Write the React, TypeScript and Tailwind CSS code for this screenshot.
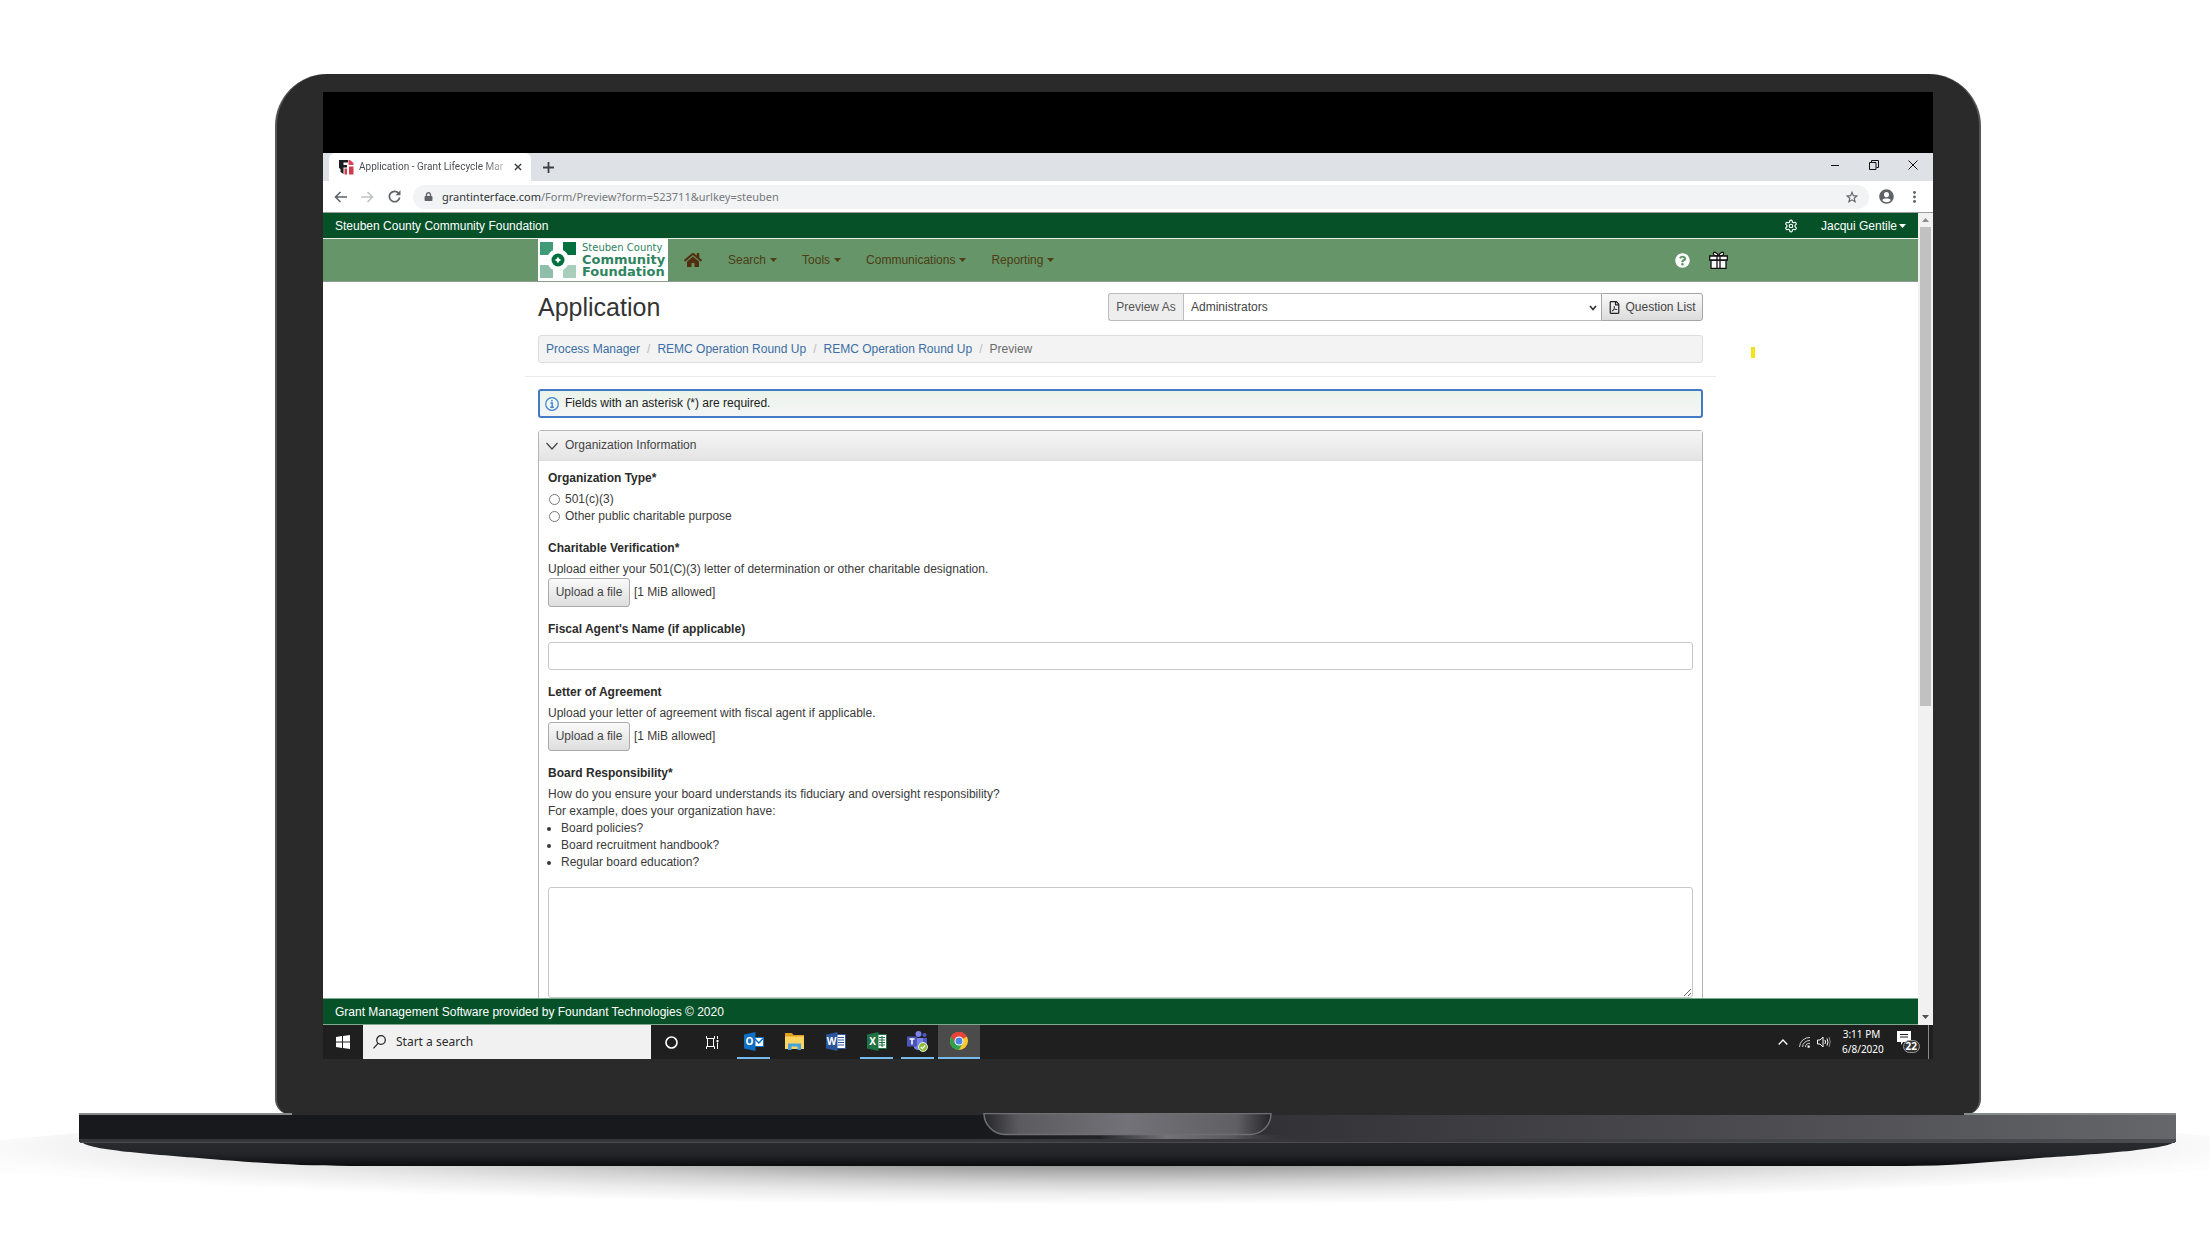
import type { ReactNode } from "react";
import { FaHome, FaQuestionCircle, FaLock, FaUserCircle, FaRegFilePdf } from "react-icons/fa";
import { LuSettings } from "react-icons/lu";

const NAV_ITEMS = ["Search", "Tools", "Communications", "Reporting"];

const CRUMBS = ["Process Manager", "REMC Operation Round Up", "REMC Operation Round Up"];

function Caret({ className = "" }: { className?: string }) {
  return (
    <svg className={className} width="7" height="4" viewBox="0 0 7 4" fill="currentColor">
      <path d="M0 0h7L3.500 4z" />
    </svg>
  );
}

/* ---------- browser chrome ---------- */

function Favicon() {
  return (
    <svg width="15" height="15" viewBox="0 0 15 15">
      <path d="M0 0h9v2.500H4.500V5H8v2.500H4.500V14L1.500 12V9L0 8z" fill="#1d1d20" />
      <path d="M9.500 0h1.500l3.500 3v2H9.500z" fill="#d84455" />
      <path d="M5.500 8.500h2.500v6H5.500zM10 6.500h4.500v8H10z" fill="#cf3b4c" />
    </svg>
  );
}

function TabStrip() {
  return (
    <div className="flex h-7 items-end bg-[#dee1e6] pl-[6px]">
      <div className="flex h-7 w-[202px] items-center rounded-t-md bg-white pl-[10px] pr-[9px]">
        <Favicon />
        <span className="ml-[5px] whitespace-nowrap bg-gradient-to-r from-[#45494d] from-85% to-[#b5b7b9] bg-clip-text font-[Roboto] text-[10px] leading-4 text-transparent">
          Application - Grant Lifecycle Mar
        </span>
        <button aria-label="Close tab" className="ml-auto">
          <svg width="8" height="8" viewBox="0 0 9 9" stroke="#3c4043" strokeWidth="1.600">
            <path d="M1 1l7 7M8 1L1 8" />
          </svg>
        </button>
      </div>
      <button aria-label="New tab" className="ml-3 flex h-7 items-center">
        <svg width="11" height="11" viewBox="0 0 11 11" stroke="#3c4043" strokeWidth="1.800">
          <path d="M5.500 0v11M0 5.500h11" />
        </svg>
      </button>
      <div className="ml-auto mr-[15px] flex h-7 items-center gap-[29px] pb-1">
        <button aria-label="Minimize">
          <svg width="10" height="10" viewBox="0 0 10 10" stroke="#111">
            <path d="M1 5.500h8" />
          </svg>
        </button>
        <button aria-label="Restore">
          <svg width="10" height="10" viewBox="0 0 10 10" fill="none" stroke="#111">
            <path d="M.5 2.500h6.500v7H.5zM2.500 2.500v-2h7v7h-2" />
          </svg>
        </button>
        <button aria-label="Close window">
          <svg width="10" height="10" viewBox="0 0 10 10" stroke="#111">
            <path d="M.5.5l9 9M9.500.5l-9 9" />
          </svg>
        </button>
      </div>
    </div>
  );
}

function Toolbar() {
  return (
    <div className="flex h-8 items-center border-b border-[#9c9c9c] bg-white pl-[11px] pr-[17px]">
      <button aria-label="Back">
        <svg width="13" height="12" viewBox="0 0 13 12" fill="none" stroke="#5f6368" strokeWidth="1.600">
          <path d="M13 6H1.500M6.500 1l-5 5 5 5" />
        </svg>
      </button>
      <button aria-label="Forward" className="ml-[14px]">
        <svg width="13" height="12" viewBox="0 0 13 12" fill="none" stroke="#bfc1c4" strokeWidth="1.600">
          <path d="M0 6h11.500M6.500 1l5 5-5 5" />
        </svg>
      </button>
      <button aria-label="Reload" className="ml-[14px]">
        <svg width="13" height="13" viewBox="0 0 13 13" fill="none" stroke="#5f6368" strokeWidth="1.700">
          <path d="M10.900 3.600A5.200 5.200 0 1 0 11.700 7.500" />
          <path d="M12.500.3v5H7.500z" fill="#5f6368" stroke="none" />
        </svg>
      </button>
      <div className="ml-[12px] flex h-6 flex-1 items-center rounded-full bg-[#f1f3f4] px-[11px]">
        <FaLock size={9} color="#5f6368" />
        <span className="ml-[9px] flex-1 text-[11px] leading-5 text-[#77797c]">
          <span className="text-[#303235]">grantinterface.com</span>/Form/Preview?form=523711&urlkey=steuben
        </span>
        <svg width="12" height="12" viewBox="0 0 24 24" fill="none" stroke="#5f6368" strokeWidth="2.200">
          <path d="M12 2.500l2.700 6.800 7.300.5-5.600 4.700 1.800 7.100L12 17.700l-6.200 3.900 1.800-7.100L2 9.800l7.300-.5z" />
        </svg>
      </div>
      <FaUserCircle size={15} color="#5f6368" className="ml-[10px]" />
      <svg className="ml-[19px]" width="3" height="12" viewBox="0 0 3 12" fill="#5f6368">
        <circle cx="1.500" cy="1.500" r="1.400" />
        <circle cx="1.500" cy="6" r="1.400" />
        <circle cx="1.500" cy="10.500" r="1.400" />
      </svg>
    </div>
  );
}

/* ---------- grant site ---------- */

function LogoMark() {
  return (
    <svg width="36" height="36" viewBox="0 0 36 36">
      <rect width="13" height="13" fill="#3f9a76" />
      <rect x="23" width="13" height="13" fill="#04703f" />
      <rect y="23" width="13" height="13" fill="#8fbfa8" />
      <rect x="23" y="23" width="13" height="13" fill="#a9cfbc" />
      <circle cx="18" cy="18" r="11" fill="#fff" />
      <circle cx="18" cy="18" r="6.500" fill="#04703f" />
      <path d="M18 15.500l.9 1.600 1.600.9-1.600.9-.9 1.600-.9-1.600-1.600-.9 1.600-.9z" fill="#fff" stroke="#fff" />
    </svg>
  );
}

function GiftIcon() {
  return (
    <svg width="19" height="18" viewBox="0 0 19 18" fill="#fff" stroke="#111" strokeWidth="1.300">
      <path d="M9.500 5C8 1 4 0 4.500 3c.2 1.500 2.500 2 5 2zM9.500 5c1.500-4 5.500-5 5-2-.2 1.500-2.500 2-5 2z" />
      <path d="M2 9h15v8.300H2z" />
      <path d="M.7 5h17.600v4H.7z" />
      <path d="M8 5v12M11 5v12" />
    </svg>
  );
}

function SiteHeader() {
  return (
    <header>
      <div className="flex h-[26px] items-center border-b border-[#e6efe8] bg-[#065128] pl-[12px] pr-[12px] text-[12px] text-white">
        <span>Steuben County Community Foundation</span>
        <button aria-label="Settings" className="ml-auto">
          <LuSettings size={14} />
        </button>
        <button className="ml-[23px] flex items-center gap-[2px]">
          Jacqui Gentile
          <Caret />
        </button>
      </div>
      <nav className="h-[43px] border-b border-[#8f9a90] bg-[#659569]">
        <div className="mx-auto flex h-[42px] max-w-[1215px] items-center pl-[25px]">
          <a href="#home" className="flex h-[42px] w-[130px] items-center gap-[6px] bg-white pl-[2px] font-['DejaVu_Sans']">
            <LogoMark />
            <span className="flex flex-col text-[13px] font-bold leading-3 text-[#2f8460]">
              <span className="text-[10px] font-normal">Steuben County</span>
              <span>Community</span>
              <span>Foundation</span>
            </span>
          </a>
          <a href="#home" aria-label="Home" className="ml-[16px] text-[#532e0e]">
            <FaHome size={18} />
          </a>
          <div className="ml-[26px] flex gap-[25px]">
            {NAV_ITEMS.map((item) => (
              <button key={item} className="flex items-center gap-[4px] text-[12px] text-[#4d3c14]">
                {item}
                <Caret />
              </button>
            ))}
          </div>
          <button aria-label="Help" className="ml-auto text-white">
            <FaQuestionCircle size={15} />
          </button>
          <button aria-label="Gifts" className="ml-[19px]">
            <GiftIcon />
          </button>
        </div>
      </nav>
    </header>
  );
}

function Field({ label, htmlFor, children }: { label: string; htmlFor: string; children: ReactNode }) {
  return (
    <div className="mb-[14px]">
      <label htmlFor={htmlFor} className="mb-1 block font-bold text-[#2b2b2b]">
        {label}
      </label>
      {children}
    </div>
  );
}

function UploadRow({ id }: { id: string }) {
  return (
    <div className="flex items-center gap-[4px]">
      <button
        id={id}
        className="h-[29px] w-[82px] rounded-[3px] border border-[#aaa] bg-gradient-to-b from-[#fafafa] to-[#dedede] text-[#444]"
      >
        Upload a file
      </button>
      <span>[1 MiB allowed]</span>
    </div>
  );
}

function Radio({ label }: { label: string }) {
  return (
    <label className="flex items-center gap-[5px]">
      <input
        type="radio"
        name="org-type"
        className="ml-px size-[11px] appearance-none rounded-full border border-[#767676] bg-white checked:border-4"
      />
      {label}
    </label>
  );
}

function ApplicationForm() {
  return (
    <main className="relative min-h-0 flex-1 overflow-hidden bg-white text-[12px] leading-[17px] text-[#3a3a3a]">
      <div className="mx-auto max-w-[1165px] pt-[11px]">
        <div className="flex h-7 items-center">
          <h1 className="text-[25px] leading-7 text-[#333]">Application</h1>
          <div className="ml-auto flex h-7 w-[595px]">
            <label
              htmlFor="preview-as"
              className="flex w-[75px] items-center justify-center rounded-l-[3px] border border-r-0 border-[#bbb] bg-[#eee] text-[#555]"
            >
              Preview As
            </label>
            <div className="relative flex-1">
              <select
                id="preview-as"
                className="h-7 w-full appearance-none border border-r-0 border-[#bbb] bg-white px-[7px] text-[#444]"
              >
                <option>Administrators</option>
              </select>
              <svg
                className="pointer-events-none absolute right-[4px] top-[12px]"
                width="8"
                height="6"
                viewBox="0 0 8 6"
                fill="none"
                stroke="#333"
                strokeWidth="1.600"
              >
                <path d="M1 1l3 3.500L7 1" />
              </svg>
            </div>
            <button className="flex w-[102px] items-center justify-center gap-[4px] rounded-r-[3px] border border-[#a5a5a5] bg-gradient-to-b from-[#fafafa] to-[#dcdcdc] text-[#444]">
              <FaRegFilePdf size={13} color="#222" />
              Question List
            </button>
          </div>
        </div>
        <ol className="mt-[14px] flex h-7 items-center rounded-[3px] border border-[#ddd] bg-[#f3f3f3] pl-[7px]">
          {CRUMBS.map((crumb, i) => (
            <li key={i} className="flex items-center text-[#bbb]">
              <a href="#crumb" className="text-[#3b6fa5]">
                {crumb}
              </a>
              <span className="mx-[7px]">/</span>
            </li>
          ))}
          <li className="text-[#6b6b6b]">Preview</li>
        </ol>
      </div>
      <hr className="mx-auto mt-[13px] max-w-[1191px] border-[#eaeaea]" />
      <div className="mx-auto mt-[12px] max-w-[1165px]">
        <div className="flex h-[29px] items-center rounded-[3px] border-2 border-[#4479c4] bg-gradient-to-b from-[#eaf4ea] to-[#f4f5f6] pl-[5px] text-[#222]">
          <svg width="14" height="14" viewBox="0 0 14 14" fill="none" stroke="#3c82cf">
            <circle cx="7" cy="7" r="6.300" strokeWidth="1.200" />
            <path d="M5.500 6h1.700v4M5.300 10.300h3.500M6.900 3v1.500" strokeWidth="1.400" />
          </svg>
          <span className="ml-[6px]">Fields with an asterisk (*) are required.</span>
        </div>
        <section className="mt-[12px] rounded-t-[3px] border border-[#b5b5b5]">
          <h2 className="flex h-[30px] items-center border-b border-[#ddd] bg-gradient-to-b from-[#f6f6f6] to-[#e4e4e4] pl-[7px] text-[#444]">
            <svg width="12" height="8" viewBox="0 0 12 8" fill="none" stroke="#444" strokeWidth="1.200">
              <path d="M.5 1L6 7l5.500-6" />
            </svg>
            <span className="ml-[7px]">Organization Information</span>
          </h2>
          <form className="px-[9px] pb-8 pt-[9px]">
            <fieldset className="mb-[15px]">
              <legend className="mb-1 font-bold text-[#2b2b2b]">Organization Type*</legend>
              <Radio label="501(c)(3)" />
              <Radio label="Other public charitable purpose" />
            </fieldset>
            <Field label="Charitable Verification*" htmlFor="verification">
              <p>Upload either your 501(C)(3) letter of determination or other charitable designation.</p>
              <UploadRow id="verification" />
            </Field>
            <Field label="Fiscal Agent's Name (if applicable)" htmlFor="fiscal-agent">
              <input
                id="fiscal-agent"
                type="text"
                className="block h-7 w-full rounded-[3px] border border-[#c8c8c8] bg-white px-2"
              />
            </Field>
            <Field label="Letter of Agreement" htmlFor="agreement">
              <p>Upload your letter of agreement with fiscal agent if applicable.</p>
              <UploadRow id="agreement" />
            </Field>
            <Field label="Board Responsibility*" htmlFor="board">
              <p>How do you ensure your board understands its fiduciary and oversight responsibility?</p>
              <p>For example, does your organization have:</p>
              <ul className="list-disc pl-[13px]">
                <li>Board policies?</li>
                <li>Board recruitment handbook?</li>
                <li>Regular board education?</li>
              </ul>
              <textarea
                id="board"
                className="mt-4 block h-[111px] w-full rounded-[3px] border border-[#c8c8c8] bg-white px-2"
              />
            </Field>
          </form>
        </section>
      </div>
      <div className="absolute right-[163px] top-[65px] h-[11px] w-[4px] bg-[#f7e01c]" />
    </main>
  );
}

function Scrollbar() {
  return (
    <div className="flex w-[15px] flex-col items-center bg-[#f1f1f1]">
      <svg className="my-[5px]" width="7" height="4" viewBox="0 0 7 4" fill="#8c8c8c">
        <path d="M0 4h7L3.500 0z" />
      </svg>
      <div className="h-[479px] w-[11px] bg-[#c1c1c1]" />
      <svg className="mb-[6px] mt-auto" width="7" height="4" viewBox="0 0 7 4" fill="#505050">
        <path d="M0 0h7L3.500 4z" />
      </svg>
    </div>
  );
}

/* ---------- taskbar ---------- */

function OfficeIcon({ letter, color, children }: { letter: string; color: string; children: ReactNode }) {
  return (
    <svg width="20" height="19" viewBox="0 0 20 19">
      {children}
      <path d="M0 2.500L11.500 0v19L0 16.500z" fill={color} />
      <text x="5.500" y="13" textAnchor="middle" fontSize="10" fontWeight="700" fill="#fff">
        {letter}
      </text>
    </svg>
  );
}

function OutlookIcon() {
  return (
    <OfficeIcon letter="O" color="#0f6fc5">
      <path d="M9 5.500h10.500v9H9z" fill="#fff" stroke="#0f6fc5" />
      <path d="M11 7l3.800 4L19 6.500" fill="none" stroke="#0f6fc5" strokeWidth="1.500" />
    </OfficeIcon>
  );
}

function ExplorerIcon() {
  return (
    <svg width="19" height="17" viewBox="0 0 19 17">
      <path d="M0 0h7l1.500 2H19v4H0z" fill="#e0a023" />
      <path d="M0 3.500h19V16H0z" fill="#fbd462" />
      <path d="M3 10.500h13V17h-3.500v-3.500h-6V17H3z" fill="#48a2d8" />
    </svg>
  );
}

function WordIcon() {
  return (
    <OfficeIcon letter="W" color="#2a5699">
      <path d="M9 2.500h10.500v14H9z" fill="#fff" stroke="#2a5699" />
      <path d="M12 5.500h6M12 8h6M12 10.500h6M12 13h6" stroke="#2a5699" strokeWidth="1.200" />
    </OfficeIcon>
  );
}

function ExcelIcon() {
  return (
    <OfficeIcon letter="X" color="#1f7244">
      <path d="M9 2.500h10.500v14H9z" fill="#fff" stroke="#1f7244" />
      <path d="M12 5.500h6M12 8h6M12 10.500h6M12 13h6M15 4v11" stroke="#1f7244" strokeWidth="1.100" />
    </OfficeIcon>
  );
}

function TeamsIcon() {
  return (
    <svg width="21" height="21" viewBox="0 0 21 21">
      <circle cx="11.500" cy="3" r="3" fill="#7b83eb" />
      <circle cx="17.500" cy="4" r="2" fill="#5059c9" />
      <path d="M14 7h6v6a3.500 3.500 0 0 1-6 2z" fill="#5059c9" />
      <path d="M7 7h9v7a5 5 0 0 1-9 3z" fill="#7b83eb" />
      <path d="M0 5.500h10v10H0z" fill="#4b53bc" />
      <path d="M2.500 8h5M5 8v5.500" stroke="#fff" strokeWidth="1.500" />
      <circle cx="16" cy="16" r="4.500" fill="#8cbd3b" stroke="#fff" strokeWidth=".8" />
      <path d="M13.800 16l1.600 1.700 2.800-3.200" fill="none" stroke="#fff" strokeWidth="1.200" />
    </svg>
  );
}

function ChromeIcon() {
  return (
    <svg width="18" height="18" viewBox="0 0 18 18">
      <circle cx="9" cy="9" r="9" fill="#fbc92f" />
      <path d="M9 9L1.200 4.500A9 9 0 0 1 16.800 4.500z" fill="#e5443a" />
      <path d="M1.200 4.500A9 9 0 0 0 8.800 18l4-6.800L9 9z" fill="#2fa24e" />
      <path d="M9 4.500h7.800A9 9 0 0 0 1.200 4.500L5 11z" fill="#e5443a" />
      <circle cx="9" cy="9" r="4.500" fill="#fff" />
      <circle cx="9" cy="9" r="3.500" fill="#4a86e8" />
    </svg>
  );
}

const APPS = [
  { name: "Outlook", icon: <OutlookIcon />, running: true },
  { name: "File Explorer", icon: <ExplorerIcon />, running: false },
  { name: "Word", icon: <WordIcon />, running: false },
  { name: "Excel", icon: <ExcelIcon />, running: true },
  { name: "Teams", icon: <TeamsIcon />, running: true },
];

function Taskbar() {
  return (
    <div className="flex h-[34px] shrink-0 items-stretch bg-[#1f1f1f] text-white">
      <button aria-label="Start" className="flex w-[40px] items-center justify-center">
        <svg width="14" height="14" viewBox="0 0 14 14" fill="#fff">
          <path d="M0 2l6-.9v5.500H0zM7 1l7-1v6.600H7zM0 7.500h6V13l-6-.9zM7 7.500h7V14l-7-1z" />
        </svg>
      </button>
      <label className="flex w-[288px] items-center bg-[#f1f1f1] pl-[10px]">
        <svg width="13" height="14" viewBox="0 0 13 14" fill="none" stroke="#222" strokeWidth="1.200">
          <circle cx="8" cy="5" r="4.300" />
          <path d="M5 8.300L.5 13.300" />
        </svg>
        <input
          type="text"
          aria-label="Start a search"
          placeholder="Start a search"
          className="ml-[10px] w-[200px] bg-transparent text-[12px] outline-none placeholder:text-[#2b2b2b]"
        />
      </label>
      <button aria-label="Cortana" className="flex w-[40px] items-center justify-center">
        <svg width="13" height="13" viewBox="0 0 13 13" fill="none" stroke="#fff" strokeWidth="1.600">
          <circle cx="6.500" cy="6.500" r="5.500" />
        </svg>
      </button>
      <button aria-label="Task view" className="flex w-[42px] items-center justify-center">
        <svg width="13" height="13" viewBox="0 0 13 13" fill="none" stroke="#fff">
          <path d="M.5 0v2.500h8V0M.5 13v-2.500h8V13M1.500 2.500v8M7.500 2.500v8M11.500 0v3M11.500 6.500V13" />
          <path d="M10.500 4h2v2h-2z" fill="#fff" stroke="none" />
        </svg>
      </button>
      {APPS.map((app) => (
        <button key={app.name} aria-label={app.name} className="flex w-[41px] flex-col items-center">
          <span className="flex h-8 items-center">{app.icon}</span>
          {app.running && <span className="h-[2px] w-[33px] bg-[#76b9ed]" />}
        </button>
      ))}
      <button aria-label="Chrome" className="flex w-[42px] flex-col items-center bg-[#4b4b4b]">
        <span className="flex h-8 items-center">
          <ChromeIcon />
        </span>
        <span className="h-[2px] w-full bg-[#76b9ed]" />
      </button>
      <div className="ml-auto flex items-center">
        <svg width="10" height="6" viewBox="0 0 10 6" fill="none" stroke="#fff" strokeWidth="1.300">
          <path d="M.7 5.500L5 1l4.300 4.500" />
        </svg>
        <svg className="ml-[11px]" width="11" height="12" viewBox="0 0 11 12" fill="none" stroke="#d0d0d0">
          <path d="M.5 11A10 10 0 0 1 11 1.500M3.500 11A7 7 0 0 1 11 4.500M6.300 11A4.500 4.500 0 0 1 11 7.300" />
          <path d="M8.500 9.500h2.200v2.200H8.500z" fill="#fff" stroke="none" />
        </svg>
        <svg className="ml-[7px]" width="14" height="12" viewBox="0 0 14 12" fill="none" stroke="#fff">
          <path d="M.5 4h2.500l3-3v10L3 8H.5z" />
          <path d="M8 4q1 2 0 4M10 2.500q2 3.500 0 7" />
          <path d="M12 1q2.500 5 0 10" stroke="#888" />
        </svg>
        <div className="ml-[11px] w-[39px] text-center text-[10px] leading-[15px]">
          <div className="whitespace-nowrap">3:11 PM</div>
          <div>6/8/2020</div>
        </div>
        <div className="relative ml-[16px] h-[22px] w-[23px]">
          <svg width="15" height="15" viewBox="0 0 15 15">
            <path d="M0 0h14v11H6l-2 3v-3H0z" fill="#fff" />
            <path d="M3 3.500h8M3 6h8" stroke="#1f1f1f" />
          </svg>
          <span className="absolute bottom-0 right-0 rounded-full border border-[#999] bg-[#333] px-[2px] text-[10px] font-bold leading-[11px]">
            22
          </span>
        </div>
        <div className="ml-[8px] mr-[4px] h-[34px] w-px bg-[#8a8a8a]" />
      </div>
    </div>
  );
}

/* ---------- laptop ---------- */

function LaptopBase() {
  return (
    <svg className="relative -mt-[2px] block h-[137px] w-full" viewBox="0 0 2210 137" preserveAspectRatio="none">
      <defs>
        <radialGradient id="floor" cx="0.5" cy="0.2" r="0.8" gradientTransform="translate(0.175 0) scale(0.65 1)">
          <stop offset="0%" stopColor="#888" />
          <stop offset="33%" stopColor="#9a9a9a" />
          <stop offset="62%" stopColor="#d2d2d2" />
          <stop offset="80%" stopColor="#ebebeb" />
          <stop offset="100%" stopColor="#fdfdfd" />
        </radialGradient>
        <linearGradient id="deck" x1="0" x2="1" y1="0" y2="0">
          <stop offset="0%" stopColor="#17191d" />
          <stop offset="43%" stopColor="#17191d" />
          <stop offset="58%" stopColor="#343438" />
          <stop offset="85%" stopColor="#515156" />
          <stop offset="100%" stopColor="#65676b" />
        </linearGradient>
        <linearGradient id="deckEdge" x1="0" x2="1" y1="0" y2="0">
          <stop offset="0%" stopColor="#36363b" />
          <stop offset="60%" stopColor="#36363b" />
          <stop offset="100%" stopColor="#4b4c51" />
        </linearGradient>
        <linearGradient id="belly" x1="0" x2="0" y1="0" y2="1">
          <stop offset="0%" stopColor="#282a2e" />
          <stop offset="50%" stopColor="#232529" />
          <stop offset="100%" stopColor="#0d0d0e" />
        </linearGradient>
        <linearGradient id="notch" x1="0" x2="1" y1="0" y2="0">
          <stop offset="0%" stopColor="#26262a" />
          <stop offset="12%" stopColor="#5a5a5f" />
          <stop offset="50%" stopColor="#737278" />
          <stop offset="88%" stopColor="#5f5f64" />
          <stop offset="100%" stopColor="#26262a" />
        </linearGradient>
        <linearGradient id="glow" x1="0" x2="1" y1="0" y2="0">
          <stop offset="0%" stopColor="#737278" stopOpacity="0" />
          <stop offset="35%" stopColor="#737278" />
          <stop offset="70%" stopColor="#59595d" />
          <stop offset="100%" stopColor="#38383c" stopOpacity="0" />
        </linearGradient>
      </defs>
      <path d="M0 27L79 20H2176L2210 23V57C1900 80 1500 91 1128 91C700 91 300 82 0 59z" fill="url(#floor)" />
      <path d="M79 0H292V2H79zM1964 0H2176V2H1964z" fill="#858b89" />
      <path d="M79 2H2176V29H79z" fill="url(#deck)" />
      <path d="M1100 22H1290V26H1100z" fill="url(#glow)" />
      <path d="M79 26H2176V29H79z" fill="url(#deckEdge)" />
      <path d="M82 29H2174C2168 36 2100 41 2040 45C1990 49 1950 53 1905 53H350C300 53 260 50 210 46C150 41 88 37 82 29z" fill="url(#belly)" />
      <path d="M80 29.500H2175" stroke="#4a4b50" />
      <path d="M984 .5H1271C1271 14 1260 21.500 1250 21.500H1005C994 21.500 984 12 984 .5z" fill="url(#notch)" stroke="#6f6f73" strokeWidth="1.500" />
    </svg>
  );
}

export default function App() {
  return (
    <div className="min-h-screen bg-white pt-[74px] font-['Liberation_Sans',Arial,sans-serif]">
      <div className="pl-[275px] pr-[229px]">
        <div className="flex h-[calc(100vh-209px)] flex-col rounded-b-[16px] rounded-t-[52px] border-x-2 border-[#555] bg-[#2a2a2a] px-[46px] pb-[56px] pt-[18px]">
          <div className="h-[61px] shrink-0 bg-black" />
          <div className="shrink-0 font-['Noto_Sans',sans-serif]">
            <TabStrip />
            <Toolbar />
          </div>
          <div className="flex min-h-0 flex-1">
            <div className="flex min-w-0 flex-1 flex-col">
              <SiteHeader />
              <ApplicationForm />
              <footer className="flex h-[27px] shrink-0 items-center border-y border-[#7fa98e] bg-[#065128] pl-[12px] text-[12px] text-white">
                Grant Management Software provided by Foundant Technologies © 2020
              </footer>
            </div>
            <Scrollbar />
          </div>
          <div className="font-['Noto_Sans',sans-serif]">
            <Taskbar />
          </div>
        </div>
      </div>
      <LaptopBase />
    </div>
  );
}
